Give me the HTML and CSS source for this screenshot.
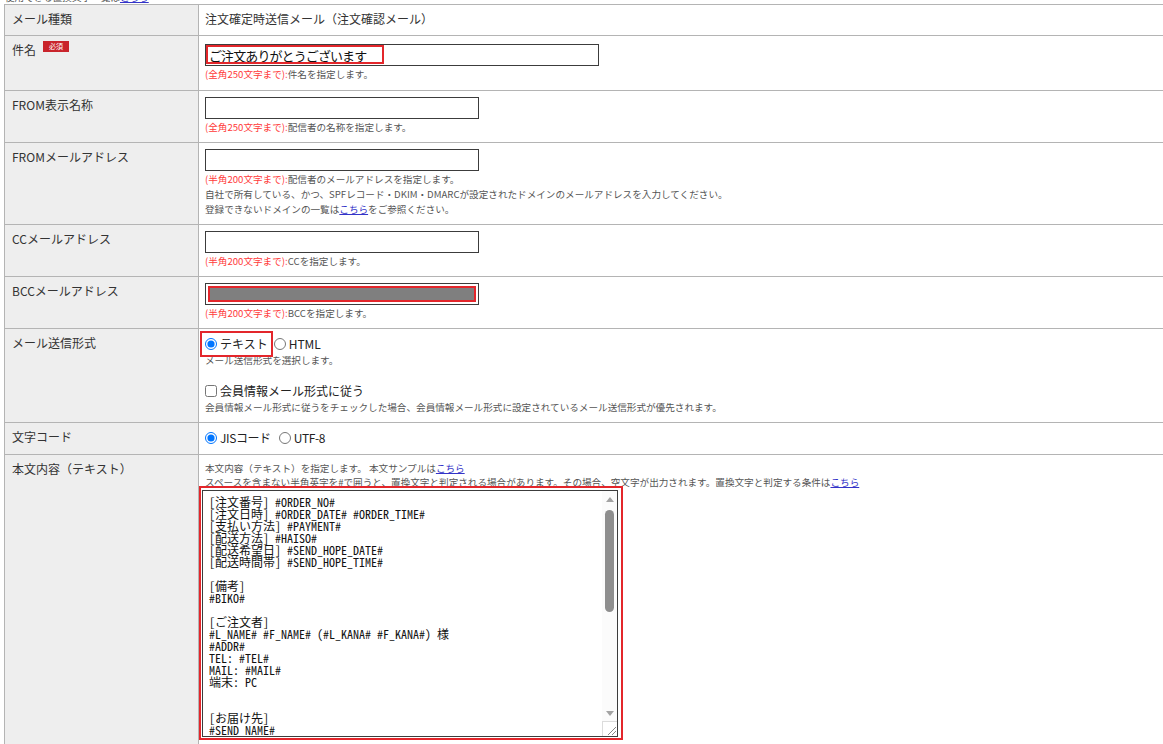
FILE: index.html
```html
<!DOCTYPE html>
<html lang="ja">
<head>
    <meta charset="UTF-8">
    <meta name="viewport" content="width=device-width, initial-scale=1.0">
    <title>メール設定</title>
    <link rel="stylesheet" href="styles.css">
</head>
<body>
    <div class="crumb"><p>使用できる置換文字一覧は<a href="#">こちら</a></p></div>

    <table class="form">
        <colgroup>
            <col class="col-label">
            <col>
        </colgroup>
        <tr class="row-first">
            <th>メール種類</th>
            <td>注文確定時送信メール（注文確認メール）</td>
        </tr>
        <tr class="row-subject">
            <th class="th-req">件名<span class="req">必須</span></th>
            <td>
                <div class="field field-subject">
                    <input type="text" class="inp inp-wide" value="ご注文ありがとうございます">
                    <span class="mark mark-subject"></span>
                </div>
                <p class="note"><span class="lim">(全角250文字まで):</span>件名を指定します。</p>
            </td>
        </tr>
        <tr>
            <th>FROM表示名称</th>
            <td>
                <input type="text" class="inp">
                <p class="note"><span class="lim">(全角250文字まで):</span>配信者の名称を指定します。</p>
            </td>
        </tr>
        <tr>
            <th>FROMメールアドレス</th>
            <td>
                <input type="text" class="inp">
                <p class="note"><span class="lim">(半角200文字まで):</span>配信者のメールアドレスを指定します。<br>
                自社で所有している、かつ、SPFレコード・DKIM・DMARCが設定されたドメインのメールアドレスを入力してください。<br>
                登録できないドメインの一覧は<a href="#">こちら</a>をご参照ください。</p>
            </td>
        </tr>
        <tr>
            <th>CCメールアドレス</th>
            <td>
                <input type="text" class="inp">
                <p class="note"><span class="lim">(半角200文字まで):</span>CCを指定します。</p>
            </td>
        </tr>
        <tr>
            <th>BCCメールアドレス</th>
            <td>
                <div class="field">
                    <input type="text" class="inp">
                    <span class="mark mark-hidden"></span>
                </div>
                <p class="note"><span class="lim">(半角200文字まで):</span>BCCを指定します。</p>
            </td>
        </tr>
        <tr>
            <th>メール送信形式</th>
            <td>
                <div class="opts">
                    <label class="opt opt-marked"><input type="radio" name="fmt" checked>テキスト<span class="mark mark-radio"></span></label>
                    <label class="opt"><input type="radio" name="fmt">HTML</label>
                </div>
                <p class="note">メール送信形式を選択します。</p>
                <div class="opts opts-spaced">
                    <label class="opt"><input type="checkbox">会員情報メール形式に従う</label>
                </div>
                <p class="note">会員情報メール形式に従うをチェックした場合、会員情報メール形式に設定されているメール送信形式が優先されます。</p>
            </td>
        </tr>
        <tr>
            <th>文字コード</th>
            <td>
                <div class="opts opts-code">
                    <label class="opt"><input type="radio" name="code" checked>JISコード</label>
                    <label class="opt"><input type="radio" name="code">UTF-8</label>
                </div>
            </td>
        </tr>
        <tr>
            <th>本文内容（テキスト）</th>
            <td class="td-body">
                <p class="note note-tight">本文内容（テキスト）を指定します。 本文サンプルは<a href="#">こちら</a><br>
                スペースを含まない半角英字を#で囲うと、置換文字と判定される場合があります。その場合、空文字が出力されます。置換文字と判定する条件は<a href="#">こちら</a></p>
                <div class="field field-body">
                    <div class="body-box">
<pre class="body-text">[注文番号] #ORDER_NO#
[注文日時] #ORDER_DATE# #ORDER_TIME#
[支払い方法] #PAYMENT#
[配送方法] #HAISO#
[配送希望日] #SEND_HOPE_DATE#
[配送時間帯] #SEND_HOPE_TIME#

[備考]
#BIKO#

[ご注文者]
#L_NAME# #F_NAME# (#L_KANA# #F_KANA#) 様
#ADDR#
TEL: #TEL#
MAIL: #MAIL#
端末: PC


[お届け先]
#SEND_NAME#
#SEND_ADDR#
#SEND_TEL#</pre>
                        <div class="vscroll">
                            <span class="arr"><svg width="8" height="5" viewBox="0 0 8 5"><path d="M0 5 L4 0 L8 5 Z" fill="#a3a3a3"/></svg></span>
                            <span class="track"><span class="thumb"></span></span>
                            <span class="arr"><svg width="8" height="5" viewBox="0 0 8 5"><path d="M0 0 L8 0 L4 5 Z" fill="#a3a3a3"/></svg></span>
                            <span class="grip"><svg width="13" height="13" viewBox="0 0 13 13"><path d="M4 12 L12 4 M8 12 L12 8" stroke="#888" stroke-width="1"/></svg></span>
                        </div>
                    </div>
                    <span class="mark mark-body"></span>
                </div>
            </td>
        </tr>
    </table>
</body>
</html>
```

FILE: styles.css
```css
html, body {
    overflow: hidden;
}

body {
    margin: 0 0 0 4px;
    font-family: "Noto Sans CJK JP", "Noto Sans", sans-serif;
    font-size: 12px;
    color: #333;
    background: #fff;
}

a {
    color: #3434c8;
    text-decoration: underline;
}

.crumb {
    height: 4px;
    overflow: hidden;
    font-size: 9.6px;
    line-height: 14px;
    color: #555;
}

.crumb p {
    margin: -10px 0 0 1px;
}

.form {
    border-collapse: collapse;
    table-layout: fixed;
    width: 1200px;
}

.col-label {
    width: 194px;
}

.form th,
.form td {
    border: 1px solid #b4b4b4;
    padding: 6px 6px 7px;
    line-height: 16px;
    vertical-align: top;
    text-align: left;
    font-weight: normal;
}

.form th {
    background: #eeeeee;
    padding-left: 7px;
}

.form td {
    background: #fff;
}

.row-first th,
.row-first td,
.row-subject td {
    padding-bottom: 8px;
}

.th-req {
    padding-top: 9px;
}

.req {
    display: inline-block;
    vertical-align: top;
    margin: -1px 0 0 7px;
    width: 26px;
    height: 11px;
    background: #c9242b;
    color: #fff;
    font-size: 7px;
    line-height: 11px;
    text-align: center;
}

.inp {
    display: block;
    box-sizing: border-box;
    width: 274px;
    height: 22px;
    margin: 0;
    padding: 0 3px;
    border: 1px solid #3c3c3c;
    font-family: "Noto Sans CJK JP", sans-serif;
    font-size: 13px;
    letter-spacing: -0.9px;
    color: #111;
    background: #fff;
}

.inp-wide {
    width: 394px;
}

.field {
    position: relative;
    width: fit-content;
}

.field-subject {
    margin-top: 2px;
}

.mark {
    position: absolute;
    border: 2px solid #e3262b;
    pointer-events: none;
}

.mark-subject {
    left: 1px;
    top: 1px;
    width: 174px;
    height: 15px;
}

.mark-hidden {
    left: 3px;
    top: 3px;
    right: 3px;
    bottom: 3px;
    background: #7f7f7f;
}

.note {
    margin: 1px 0 0;
    font-size: 9.6px;
    line-height: 15px;
    color: #555;
}

.note-tight {
    margin: 0;
    line-height: 14px;
}

.lim {
    color: #ff3a3a;
}

.opts {
    display: flex;
    align-items: center;
    gap: 6px;
    height: 17px;
    font-size: 12px;
    color: #222;
}

.opts-spaced {
    margin-top: 14px;
}

.opts-code {
    height: 18px;
    gap: 8px;
    letter-spacing: -0.4px;
}

.opt {
    position: relative;
    display: flex;
    align-items: center;
}

.opt input {
    width: 12px;
    height: 12px;
    margin: 0 3px 0 0;
}

.mark-radio {
    left: -5px;
    top: -5px;
    right: -5px;
    bottom: -5px;
}

.td-body {
    padding-top: 5px;
}

.field-body {
    margin: 1px 0 0 -3px;
}

.body-box {
    display: flex;
    box-sizing: border-box;
    width: 416px;
    height: 247px;
    border: 1px solid #3c3c3c;
    overflow: hidden;
    background: #fff;
}

.body-text {
    flex: 1;
    margin: 0;
    padding: 5px 6px 3px;
    overflow: hidden;
    font-family: "Noto Sans Mono CJK JP", "Liberation Mono", monospace;
    font-size: 12px;
    line-height: 12px;
    color: #111;
}

.vscroll {
    display: flex;
    flex-direction: column;
    width: 15px;
    background: #fbfbfb;
}

.arr {
    display: flex;
    align-items: center;
    justify-content: center;
    height: 16px;
}

.track {
    flex: 1;
    padding: 3px 3px 0;
}

.thumb {
    display: block;
    height: 102px;
    background: #8e8e8e;
    border-radius: 5px;
}

.grip {
    display: flex;
    align-items: flex-end;
    justify-content: flex-end;
    box-sizing: border-box;
    height: 15px;
    border: 1px solid #dcdcdc;
    border-right: 0;
    border-bottom: 0;
    background: #fff;
}

.mark-body {
    left: -3px;
    top: -4px;
    right: -5px;
    bottom: -3px;
}
```
